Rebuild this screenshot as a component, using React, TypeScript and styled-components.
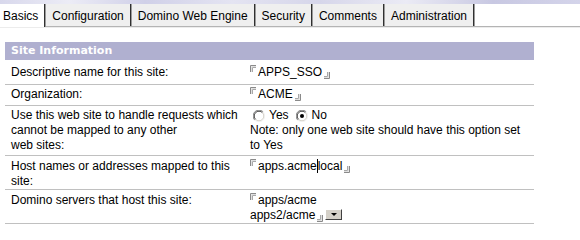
import styled, { createGlobalStyle } from 'styled-components';

const GlobalStyle = createGlobalStyle`
  body {
    margin: 0;
    background: #fff;
    font-family: "Liberation Sans", Arial, sans-serif;
    font-size: 12px;
    color: #000;
  }
`;

const TopStrip = styled.div`
  height: 4px;
  background: linear-gradient(
    90deg,
    #d8d8ec 0%,
    #ececf6 12%,
    #d0d0e8 25%,
    #e4e4f2 40%,
    #d6d6ea 55%,
    #ebebf5 70%,
    #c8c8e2 85%,
    #d4d4ea 100%
  );
`;

const TabBar = styled.div`
  display: flex;
  height: 22px;
  border-bottom: 1px solid #b4b4b4;
  box-shadow: 0 1px 0 #ececec;
`;

const Tab = styled.div<{ $active?: boolean; $first?: boolean }>`
  height: ${(p) => (p.$active ? '23px' : '22px')};
  line-height: 24px;
  padding: 0 6px 0 ${(p) => (p.$first ? '3px' : '6px')};
  margin-right: 1px;
  background: ${(p) => (p.$active ? '#fff' : '#efefef')};
  border-right: 1px solid #303030;
  box-shadow: 1px 0 0 #9a9a9a;
  white-space: nowrap;
  position: relative;
  z-index: ${(p) => (p.$active ? 1 : 0)};
`;

const Content = styled.div`
  width: 529px;
  margin: 15px 0 0 5px;
`;

const SectionHeader = styled.div`
  height: 18px;
  line-height: 18px;
  background: #b0b0d0;
  color: #fff;
  font-family: "DejaVu Sans", Verdana, sans-serif;
  font-weight: bold;
  font-size: 11px;
  padding-left: 6px;
`;

const Row = styled.div<{ $h: number; $top: number }>`
  display: grid;
  grid-template-columns: 244px 1fr;
  height: ${(p) => p.$h}px;
  padding-top: ${(p) => p.$top}px;
  box-sizing: border-box;
  border-bottom: 1px solid #c0c0c0;
  line-height: 15px;
`;

const Label = styled.div`
  padding-left: 6px;
`;

const Value = styled.div`
  padding: 0 6px 0 1px;
`;

const RadioGroup = styled.div`
  display: flex;
  align-items: center;
  height: 15px;
  gap: 4px;
  padding-left: 3px;
`;

const RadioLabel = styled.span`
  margin-right: 3px;
`;

const Caret = styled.span`
  display: inline-block;
  width: 1px;
  height: 14px;
  background: #000;
  vertical-align: -3px;
`;

const OpenMark = styled.svg`
  width: 6px;
  height: 7px;
  vertical-align: top;
  margin-right: 2px;
`;

const CloseMark = styled.svg`
  width: 6px;
  height: 7px;
  vertical-align: -3px;
  margin-left: 2px;
`;

const DropButton = styled.span`
  display: inline-block;
  width: 15px;
  height: 9px;
  margin-left: 2px;
  background: #d4d0c8;
  border-top: 1px solid #fff;
  border-left: 1px solid #fff;
  border-right: 1px solid #404040;
  border-bottom: 1px solid #404040;
  vertical-align: -1px;
  position: relative;
  &::after {
    content: '';
    position: absolute;
    left: 5px;
    top: 3px;
    border-left: 3px solid transparent;
    border-right: 3px solid transparent;
    border-top: 3px solid #000;
  }
`;

const Open = () => (
  <OpenMark viewBox="0 0 6 7">
    <path d="M0.5 7 V0.5 H6" stroke="#8a8a8a" fill="none" />
    <path d="M1.5 7 V1.5 H6" stroke="#e0e0e0" fill="none" />
    <path d="M2.5 7 V2.5 H6" stroke="#a8a8a8" fill="none" />
  </OpenMark>
);

const Close = () => (
  <CloseMark viewBox="0 0 6 7">
    <path d="M0 6.5 H5.5 V0" stroke="#8a8a8a" fill="none" />
    <path d="M0 5.5 H4.5 V0" stroke="#e0e0e0" fill="none" />
    <path d="M0 4.5 H3.5 V0" stroke="#a8a8a8" fill="none" />
  </CloseMark>
);

const Radio = ({ checked }: { checked?: boolean }) => (
  <svg width="12" height="12" viewBox="0 0 12 12">
    <circle cx="6" cy="6" r="5.5" fill="#fff" />
    <path d="M1.8 10.2 A5.5 5.5 0 0 1 10.2 1.8" stroke="#808080" fill="none" />
    <path d="M10.2 1.8 A5.5 5.5 0 0 1 1.8 10.2" stroke="#f4f4f4" fill="none" />
    <path d="M2.6 9.4 A4.5 4.5 0 0 1 9.4 2.6" stroke="#404040" fill="none" />
    <path d="M9.4 2.6 A4.5 4.5 0 0 1 2.6 9.4" stroke="#d4d0c8" fill="none" />
    {checked && <circle cx="6" cy="6" r="2" fill="#000" />}
  </svg>
);

const tabs = [
  'Basics',
  'Configuration',
  'Domino Web Engine',
  'Security',
  'Comments',
  'Administration',
];

export default function App() {
  return (
    <>
      <GlobalStyle />
      <TopStrip />
      <TabBar>
        {tabs.map((t, i) => (
          <Tab key={t} $active={i === 0} $first={i === 0}>
            {t}
          </Tab>
        ))}
      </TabBar>
      <Content>
        <SectionHeader>Site Information</SectionHeader>
        <Row $h={25} $top={5}>
          <Label>Descriptive name for this site:</Label>
          <Value>
            <Open />
            APPS_SSO
            <Close />
          </Value>
        </Row>
        <Row $h={21} $top={2}>
          <Label>Organization:</Label>
          <Value>
            <Open />
            ACME
            <Close />
          </Value>
        </Row>
        <Row $h={50} $top={2}>
          <Label>
            Use this web site to handle requests which cannot be mapped to any
            other
            <br />
            web sites:
          </Label>
          <Value>
            <RadioGroup>
              <Radio />
              <RadioLabel>Yes</RadioLabel>
              <Radio checked />
              <RadioLabel>No</RadioLabel>
            </RadioGroup>
            Note: only one web site should have this option set to Yes
          </Value>
        </Row>
        <Row $h={34} $top={3}>
          <Label>Host names or addresses mapped to this site:</Label>
          <Value>
            <Open />
            apps.acme
            <Caret />
            local
            <Close />
          </Value>
        </Row>
        <Row $h={34} $top={3}>
          <Label>Domino servers that host this site:</Label>
          <Value>
            <Open />
            apps/acme
            <br />
            apps2/acme
            <Close />
            <DropButton />
          </Value>
        </Row>
      </Content>
    </>
  );
}
